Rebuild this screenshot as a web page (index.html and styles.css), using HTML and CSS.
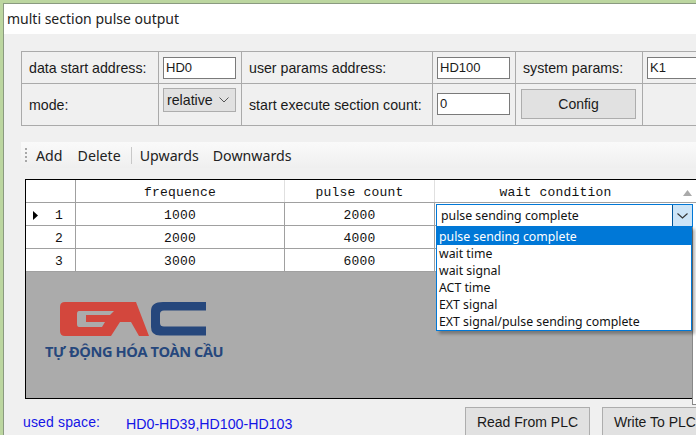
FILE: index.html
```html
<!DOCTYPE html>
<html>
<head>
<meta charset="utf-8">
<title>multi section pulse output</title>
<link rel="stylesheet" href="styles.css">
</head>
<body>
<div class="window">
  <div class="titlebar">multi section pulse output</div>
  <div class="content">
    <div class="params">
      <div class="cell lbl">data start address:</div>
      <div class="cell"><div class="input">HD0</div></div>
      <div class="cell lbl">user params address:</div>
      <div class="cell"><div class="input">HD100</div></div>
      <div class="cell lbl">system params:</div>
      <div class="cell"><div class="input">K1</div></div>
      <div class="cell lbl">mode:</div>
      <div class="cell top"><div class="select">relative<svg class="chev" width="10" height="6" viewBox="0 0 10 6"><path d="M.5.5 5 5 9.5.5" fill="none" stroke="#555" stroke-width="1"/></svg></div></div>
      <div class="cell lbl">start execute section count:</div>
      <div class="cell"><div class="input lifted">0</div></div>
      <div class="cell"><div class="btn config">Config</div></div>
      <div class="cell"></div>
    </div>
    <div class="toolbar">
      <div class="grip"></div>
      <span class="tool add">Add</span>
      <span class="tool del">Delete</span>
      <span class="sep"></span>
      <span class="tool up">Upwards</span>
      <span class="tool">Downwards</span>
    </div>
    <div class="grid">
      <div class="row head">
        <div class="c c0"></div>
        <div class="c c1">frequence</div>
        <div class="c c2">pulse count</div>
        <div class="c c3">wait condition<svg class="sort" width="9" height="6" viewBox="0 0 9 6"><path d="M4.5 0 9 6H0z" fill="#aaa"/></svg></div>
      </div>
      <div class="row">
        <div class="c c0"><svg class="arrow" width="5" height="9" viewBox="0 0 5 9"><path d="M0 0 5 4.5 0 9z" fill="#000"/></svg>1</div>
        <div class="c c1">1000</div>
        <div class="c c2">2000</div>
        <div class="c c3"></div>
      </div>
      <div class="row">
        <div class="c c0">2</div>
        <div class="c c1">2000</div>
        <div class="c c2">4000</div>
        <div class="c c3"></div>
      </div>
      <div class="row">
        <div class="c c0">3</div>
        <div class="c c1">3000</div>
        <div class="c c2">6000</div>
        <div class="c c3"></div>
      </div>
      <div class="logo">
        <svg width="150" height="36" viewBox="0 0 150 36">
          <path fill="#d3473d" fill-rule="evenodd" d="M5 0H76L89 34H79L71 20H60L51 34H5Q0 34 0 29V5Q0 0 5 0ZM19 9Q17 9 17 12V22Q17 25 19 25H42L45 20H26V13H50L54 9Z"/>
          <path fill="#26477c" d="M103 0H146V8.5H104Q100 8.5 100 12V21Q100 24.5 104 24.5H146V33.5H100Q91 33.5 91 25V9Q91 0 103 0Z"/>
        </svg>
        <div class="logotext">TỰ ĐỘNG HÓA TOÀN CẦU</div>
      </div>
    </div>
    <div class="footer">
      <span class="used">used space:</span>
      <span class="range">HD0-HD39,HD100-HD103</span>
      <div class="btn read">Read From PLC</div>
      <div class="btn write">Write To PLC</div>
    </div>
  </div>
</div>
<div class="side"></div>
<div class="combo"><span>pulse sending complete</span><div class="combobtn"><svg width="11" height="6" viewBox="0 0 11 6"><path d="M.5.5 5.5 5 10.5.5" fill="none" stroke="#333" stroke-width="1.1"/></svg></div></div>
<div class="drop">
  <div class="opt sel">pulse sending complete</div>
  <div class="opt">wait time</div>
  <div class="opt">wait signal</div>
  <div class="opt">ACT time</div>
  <div class="opt">EXT signal</div>
  <div class="opt">EXT signal/pulse sending complete</div>
</div>
</body>
</html>
```
FILE: styles.css
```css
html, body { margin: 0; padding: 0; }
body { width: 696px; height: 435px; overflow: hidden; position: relative; background: #bcd6a0; font-family: "Liberation Sans", Arial, sans-serif; color: #1a1a1a; }
.window { margin: 3px 0 0 3px; height: 432px; display: flex; flex-direction: column; background: #f0f0f0; border-left: 1px solid #8a9a80; border-top: 1px solid #8a9a80; box-sizing: border-box; width: 693px; }
.titlebar { height: 30px; flex: none; background: #fff; font: 14px/29px "Noto Sans", sans-serif; padding-left: 3px; color: #222; }
.content { flex: 1; padding: 17px 0 0 17px; min-width: 0; }
.params { display: grid; grid-template-columns: 137px 83px 191px 83px 127px 60px; grid-template-rows: 32px 41px; width: 681px; border-top: 1px solid #aaa; border-left: 1px solid #aaa; border-bottom: 1px solid #aaa; }
.cell { border-right: 1px solid #aaa; border-bottom: 1px solid #aaa; display: flex; align-items: center; padding-left: 4px; box-sizing: border-box; font-size: 14.2px; min-width: 0; }
.cell:nth-child(n+7) { border-bottom: 0; }
.cell.lbl { padding-left: 7px; white-space: nowrap; }
.cell.top { align-items: flex-start; padding-top: 4px; }
.input { width: 73px; height: 22px; background: #fff; border: 1px solid #7a7a7a; box-sizing: border-box; font-size: 13px; line-height: 19px; padding-left: 2px; }
.input.lifted { margin-bottom: 1px; }
.select { width: 73px; height: 24px; background: #e1e1e1; border: 1px solid #adadad; box-sizing: border-box; font-size: 14.2px; line-height: 20px; padding-left: 3px; display: flex; justify-content: space-between; align-items: center; padding-right: 6px; }
.btn { background: #e1e1e1; border: 1px solid #adadad; box-sizing: border-box; display: flex; align-items: center; justify-content: center; font-size: 14px; }
.config { width: 115px; height: 30px; margin: 0 0 1px 1px; }
.toolbar { margin: 16px 0 0 0; height: 26px; background: linear-gradient(#fafafa, #efefef); display: flex; align-items: center; font: 14.2px "Noto Sans", sans-serif; padding-left: 4px; color: #222; }
.grip { width: 2px; height: 14px; background: repeating-linear-gradient(#a8a8a8 0 2px, transparent 2px 4px); margin-right: 9px; }
.tool { flex: none; }
.add { margin-right: 15px; }
.del { margin-right: 10px; }
.up { margin-right: 14px; }
.sep { width: 1px; height: 17px; background: #c8c8c8; margin-right: 8px; }
.grid { margin: 11px 0 0 4px; width: 675px; height: 220px; border: 1px solid #000; border-right: 0; box-sizing: border-box; background: #ababab; font: 13px "Liberation Mono", monospace; letter-spacing: .2px; color: #111; position: relative; }
.row { display: flex; height: 23px; background: #fff; box-sizing: border-box; border-bottom: 1px solid #a0a0a0; overflow: hidden; }
.c { text-align: center; line-height: 26px; height: 22px; border-right: 1px solid #a0a0a0; box-sizing: border-box; flex: none; position: relative; }
.c0 { width: 50px; padding-left: 17px; }
.c1 { width: 209px; }
.c2 { width: 150px; }
.c3 { flex: 1; border-right: 0; padding-right: 24px; }
.head .c { border-right-color: #e0e0e0; }
.head .c0 { border-right-color: #a0a0a0; }
.sort { position: absolute; right: 8px; top: 10px; }
.arrow { position: absolute; left: 7px; top: 8px; }
.logo { position: absolute; left: 19px; top: 122px; letter-spacing: 0; }
.logo svg { display: block; margin-left: 15px; }
.logotext { font: bold 14.6px "Open Sans", sans-serif; color: #26477c; margin-top: 3px; white-space: nowrap; letter-spacing: -.42px; }
.footer { display: flex; align-items: flex-start; }
.used { color: #1414e6; font-size: 14px; letter-spacing: .15px; margin: 15px 0 0 2px; width: 103px; flex: none; }
.range { color: #1414e6; font-size: 14.2px; margin-top: 17px; width: 339px; flex: none; white-space: nowrap; }
.read { width: 125px; height: 30px; margin-top: 8px; flex: none; }
.write { width: 100px; height: 30px; margin: 8px 0 0 12px; flex: none; white-space: nowrap; justify-content: flex-start; padding-left: 11px; }
.side { position: absolute; left: 692px; top: 221px; width: 4px; height: 184px; background: #fff; border-left: 1px solid #888; border-bottom: 1px solid #888; box-sizing: border-box; }
.combo { position: absolute; left: 436px; top: 204px; width: 257px; height: 23px; background: #fff; border: 1px solid #0078d7; box-sizing: border-box; font: 12.3px/21px "Noto Sans", sans-serif; color: #111; padding-left: 4px; }
.combobtn { position: absolute; right: 0; top: 0; width: 20px; height: 21px; background: #cce4f7; border-left: 1px solid #005499; display: flex; align-items: center; justify-content: center; box-sizing: border-box; }
.drop { position: absolute; left: 436px; top: 226px; width: 256px; height: 105px; background: #fff; border: 1px solid #0078d7; border-top: 0; box-sizing: border-box; box-shadow: 3px 3px 3px rgba(0,0,0,.3); font: 12.3px/17px "Noto Sans", sans-serif; color: #111; }
.opt { height: 17px; padding-left: 2px; white-space: nowrap; }
.opt.sel { height: 19px; line-height: 21px; background: #0078d7; color: #fff; }
```
